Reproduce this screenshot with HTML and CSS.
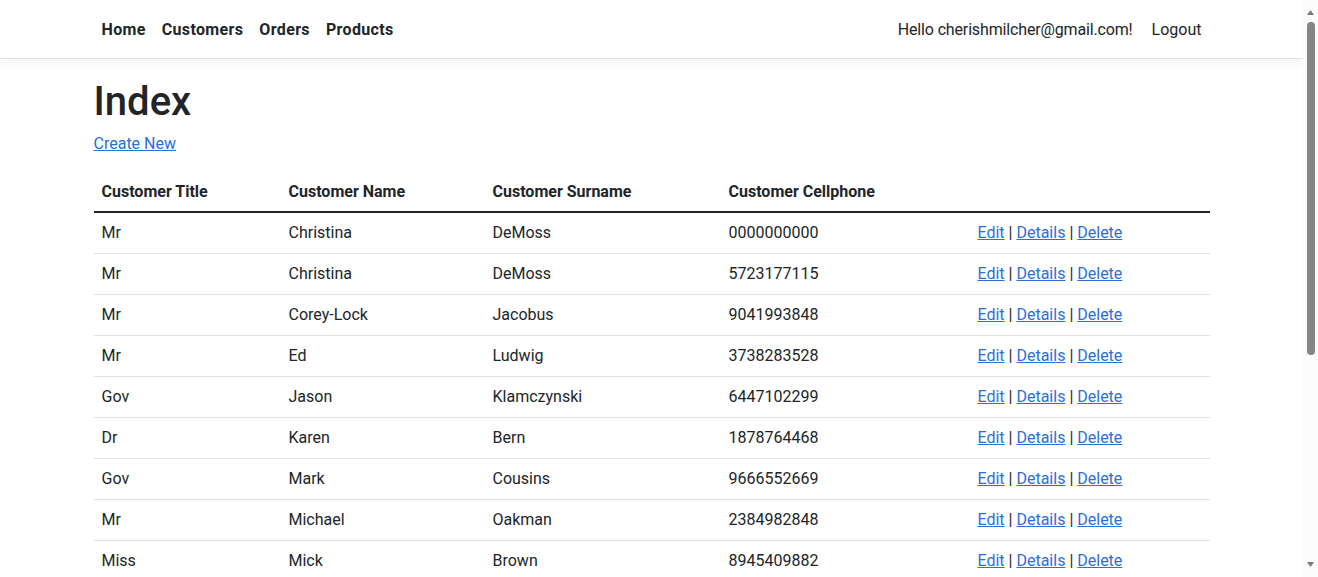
FILE: index.html
```html
<!DOCTYPE html>
<html lang="en">
<head>
<meta charset="utf-8">
<title>Index</title>
<link rel="stylesheet" href="styles.css">
</head>
<body>
<div class="shell">
  <div class="page">
    <header class="navbar">
      <div class="container nav-inner">
        <ul class="nav-left">
          <li><a class="nav-link bold" href="#">Home</a></li>
          <li><a class="nav-link bold" href="#">Customers</a></li>
          <li><a class="nav-link bold" href="#">Orders</a></li>
          <li><a class="nav-link bold" href="#">Products</a></li>
        </ul>
        <ul class="nav-right">
          <li><a class="nav-link hello" href="#">Hello cherishmilcher@gmail.com!</a></li>
          <li><button class="nav-link btn-link" type="button">Logout</button></li>
        </ul>
      </div>
    </header>
    <div class="container">
      <main class="main">
        <h1 class="title">Index</h1>
        <p class="create"><a href="#">Create New</a></p>
        <table class="table">
          <thead>
            <tr>
              <th class="c1">Customer Title</th>
              <th class="c2">Customer Name</th>
              <th class="c3">Customer Surname</th>
              <th class="c4">Customer Cellphone</th>
              <th class="c5"></th>
            </tr>
          </thead>
          <tbody>
            <tr><td>Mr</td><td>Christina</td><td>DeMoss</td><td>0000000000</td><td class="actions"><a href="#">Edit</a> | <a href="#">Details</a> | <a href="#">Delete</a></td></tr>
            <tr><td>Mr</td><td>Christina</td><td>DeMoss</td><td>5723177115</td><td class="actions"><a href="#">Edit</a> | <a href="#">Details</a> | <a href="#">Delete</a></td></tr>
            <tr><td>Mr</td><td>Corey-Lock</td><td>Jacobus</td><td>9041993848</td><td class="actions"><a href="#">Edit</a> | <a href="#">Details</a> | <a href="#">Delete</a></td></tr>
            <tr><td>Mr</td><td>Ed</td><td>Ludwig</td><td>3738283528</td><td class="actions"><a href="#">Edit</a> | <a href="#">Details</a> | <a href="#">Delete</a></td></tr>
            <tr><td>Gov</td><td>Jason</td><td>Klamczynski</td><td>6447102299</td><td class="actions"><a href="#">Edit</a> | <a href="#">Details</a> | <a href="#">Delete</a></td></tr>
            <tr><td>Dr</td><td>Karen</td><td>Bern</td><td>1878764468</td><td class="actions"><a href="#">Edit</a> | <a href="#">Details</a> | <a href="#">Delete</a></td></tr>
            <tr><td>Gov</td><td>Mark</td><td>Cousins</td><td>9666552669</td><td class="actions"><a href="#">Edit</a> | <a href="#">Details</a> | <a href="#">Delete</a></td></tr>
            <tr><td>Mr</td><td>Michael</td><td>Oakman</td><td>2384982848</td><td class="actions"><a href="#">Edit</a> | <a href="#">Details</a> | <a href="#">Delete</a></td></tr>
            <tr><td>Miss</td><td>Mick</td><td>Brown</td><td>8945409882</td><td class="actions"><a href="#">Edit</a> | <a href="#">Details</a> | <a href="#">Delete</a></td></tr>
          </tbody>
        </table>
      </main>
    </div>
  </div>
  <div class="scrollbar" aria-hidden="true">
    <svg class="arrow" width="15" height="17" viewBox="0 0 15 17"><path d="M4 15 L7.5 10 L11 15 Z" fill="#7a7a7a"/></svg>
    <div class="track"><div class="thumb"></div></div>
    <svg class="arrow" width="15" height="17" viewBox="0 0 15 17"><path d="M4 2 L7.5 7 L11 2 Z" fill="#7a7a7a"/></svg>
  </div>
</div>
</body>
</html>
```

FILE: styles.css
```css
html, body {
  margin: 0;
  padding: 0;
  height: 100%;
  overflow: hidden;
}
body {
  font-family: Roboto, "Noto Sans", "Liberation Sans", sans-serif;
  font-size: 16px;
  line-height: 1.5;
  color: #212529;
  background: #fff;
}
*, *::before, *::after { box-sizing: border-box; }

.shell {
  display: flex;
  height: 100vh;
}
.page {
  flex: 1;
  min-width: 0;
  overflow: hidden;
}
.scrollbar {
  width: 15px;
  flex: none;
  background: #fbfbfb;
  display: flex;
  flex-direction: column;
}
.arrow { display: block; flex: none; }
.track {
  flex: 1;
  padding-top: 5px;
  display: flex;
  justify-content: center;
}
.thumb {
  width: 8px;
  height: 333px;
  border-radius: 4px;
  background: #858585;
}

.container {
  width: 100%;
  max-width: 1140px;
  margin: 0 auto;
  padding: 0 12px;
}

.navbar {
  background: #fff;
  border-bottom: 1px solid #dee2e6;
  box-shadow: 0 4px 12px rgba(0, 0, 0, 0.05);
  padding: 8px 0;
  margin-bottom: 16px;
}
.nav-inner {
  display: flex;
  justify-content: space-between;
  align-items: center;
}
.nav-left, .nav-right {
  list-style: none;
  margin: 0;
  padding: 0;
  display: flex;
  align-items: center;
}
.nav-right { margin-right: -1px; }
.nav-link {
  display: block;
  padding: 9px 8px 7px;
  color: #212529;
  text-decoration: none;
  font-size: 16px;
  line-height: 24px;
  font-family: inherit;
}
.bold {
  font-weight: 700;
  letter-spacing: 0.35px;
}
.hello { letter-spacing: -0.15px; }
.btn-link {
  background: none;
  border: 1px solid transparent;
  margin-left: 2px;
  cursor: pointer;
}

.title {
  font-size: 40px;
  font-weight: 500;
  line-height: 1.2;
  margin: 0 0 6px;
  padding-top: 3px;
}
.create { margin: 0 0 16px; }
a { color: #2a6fdb; }

.table {
  width: 100%;
  border-collapse: collapse;
  margin-bottom: 16px;
}
.table th {
  text-align: left;
  font-weight: 700;
  padding: 8px 8px 7px;
  border-bottom: 2px solid #212529;
  vertical-align: bottom;
}
.table td {
  padding: 8px;
  border-bottom: 1px solid #dee2e6;
}
.c1 { width: 187px; }
.c2 { width: 204px; }
.c3 { width: 236px; }
.c4 { width: 249px; }
.c5 { width: 240px; }
```
